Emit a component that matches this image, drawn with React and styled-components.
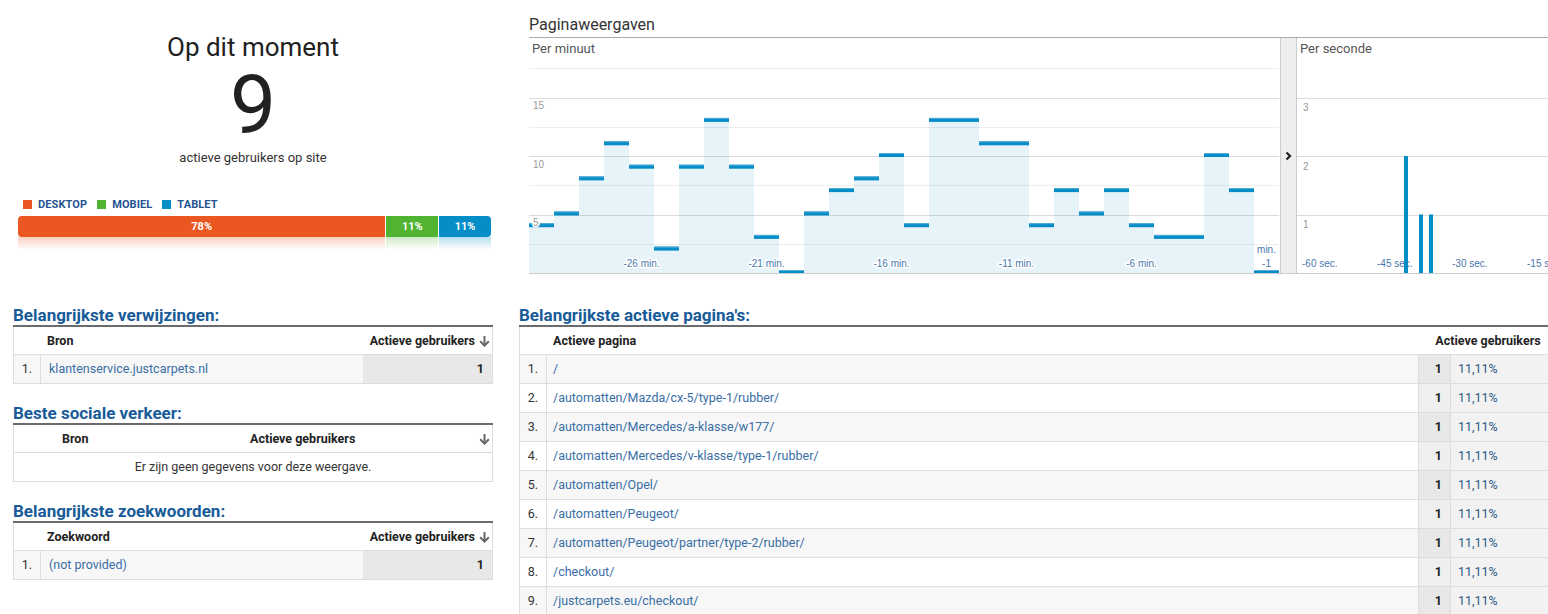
import React from 'react';
import styled, { createGlobalStyle } from 'styled-components';

const GlobalStyle = createGlobalStyle`
  html, body { margin: 0; padding: 0; background: #fff; }
  body {
    font-family: Roboto, "Noto Sans", "Liberation Sans", Arial, sans-serif;
    color: #222;
    width: 1548px;
    height: 614px;
    overflow: hidden;
  }
  *, *::before, *::after { box-sizing: border-box; }
`;

const Page = styled.div`
  display: grid;
  grid-template-columns: 480px 1040px;
  column-gap: 26px;
  padding-left: 13px;
  width: 1600px;
`;

const Column = styled.div`
  display: flex;
  flex-direction: column;
  min-width: 0;
`;

/* ---------- Now panel ---------- */
const NowPanel = styled.section`
  height: 274px;
  display: flex;
  flex-direction: column;
  align-items: center;
  padding-top: 32px;
`;
const NowTitle = styled.h1`
  margin: 0;
  font-size: 26px;
  line-height: 30px;
  font-weight: 400;
  color: #212121;
`;
const NowCount = styled.div`
  margin-top: 2px;
  font-size: 82px;
  line-height: 82px;
  font-weight: 400;
  color: #212121;
`;
const NowCaption = styled.div`
  margin-top: 3.5px;
  font-size: 13px;
  line-height: 16px;
  color: #333;
`;
const Legend = styled.ul`
  align-self: stretch;
  list-style: none;
  margin: 32px 0 0;
  padding: 0 0 0 10px;
  display: flex;
  gap: 10px;
`;
const LegendItem = styled.li`
  display: flex;
  align-items: center;
  gap: 6px;
  font-size: 11px;
  line-height: 13px;
  font-weight: 700;
  color: #1f5591;
  text-transform: uppercase;
  letter-spacing: 0.1px;
`;
const Swatch = styled.span`
  width: 9px;
  height: 9px;
  background: rgb(${p => p.$rgb});
`;
const DeviceBar = styled.div`
  align-self: stretch;
  margin: 5px 2px 0 5px;
  height: 21px;
  display: flex;
  gap: 1px;
  border-radius: 4px;
  overflow: hidden;
`;
const Segment = styled.div`
  flex: ${p => p.$share} 1 0;
  background: rgb(${p => p.$rgb});
  color: #fff;
  font-size: 11px;
  font-weight: 700;
  display: flex;
  align-items: center;
  justify-content: center;
`;
const Reflection = styled.div`
  align-self: stretch;
  margin: 0 2px 0 5px;
  height: 13px;
  display: flex;
  gap: 1px;
`;
const ReflectionSegment = styled.div`
  flex: ${p => p.$share} 1 0;
  background: linear-gradient(to bottom, rgba(${p => p.$rgb}, 0.28), rgba(${p => p.$rgb}, 0));
`;

/* ---------- Chart ---------- */
const ChartPanel = styled.section`
  margin-left: 10px;
  height: 274px;
  display: flex;
  flex-direction: column;
  width: max-content;
`;
const ChartTitle = styled.h2`
  margin: 0;
  padding: 15px 0 2px;
  font-size: 16px;
  line-height: 20px;
  font-weight: 400;
  color: #333;
  border-bottom: 1px solid #aaa;
`;
const ChartRow = styled.div`
  display: flex;
  height: 236px;
  border-bottom: 1px solid #ccc;
`;
const ChartSvg = styled.svg`
  display: block;
  flex: none;
`;
const Splitter = styled.div`
  flex: none;
  width: 17px;
  background: #eee;
  border-left: 1px solid #ccc;
  border-right: 1px solid #ccc;
  display: flex;
  align-items: center;
  justify-content: center;
`;

/* ---------- Tables ---------- */
const Tables = styled.div`
  padding-top: 12px;
  display: flex;
  flex-direction: column;
`;
const Block = styled.section`
  margin-top: 19px;
`;
const BlockTitle = styled.h2`
  margin: 0;
  padding: 1px 0 1px;
  font-size: 17px;
  line-height: 18px;
  font-weight: 700;
  color: #185b99;
  border-bottom: 2px solid #6b6b6b;
  white-space: nowrap;
`;
const Rows = styled.div`
  border-left: 1px solid #ddd;
  border-right: 1px solid #ddd;
`;
const HeadRow = styled.div`
  display: grid;
  grid-template-columns: ${p => p.$cols};
  height: 28px;
  border-bottom: 1px solid #ddd;
  font-size: 12.5px;
  font-weight: 700;
  color: #222;
`;
const BodyRow = styled.div`
  display: grid;
  grid-template-columns: ${p => p.$cols};
  height: 29px;
  border-bottom: 1px solid #ddd;
  background: ${p => (p.$shaded ? '#f7f7f7' : '#fff')};
  font-size: 12.5px;
`;
const HeadCell = styled.div`
  display: flex;
  align-items: center;
  justify-content: ${p => p.$justify || 'flex-start'};
  padding: 0 ${p => p.$pr || 0}px 0 ${p => p.$pl || 0}px;
  gap: 4px;
  white-space: nowrap;
`;
const RankCell = styled.div`
  display: flex;
  align-items: center;
  justify-content: center;
  padding-bottom: 1px;
  border-right: 1px solid #ddd;
  color: #333;
`;
const LinkCell = styled.a`
  display: flex;
  align-items: center;
  padding: 0 0 1px ${p => p.$pl}px;
  color: #3a6ea5;
  text-decoration: none;
  white-space: nowrap;
  overflow: hidden;
`;
const CountCell = styled.div`
  display: flex;
  align-items: center;
  justify-content: flex-end;
  padding: 0 8px 1px 0;
  font-weight: 700;
  color: #222;
  background: ${p => p.$bg};
  border-left: ${p => (p.$divider ? '1px solid #ddd' : 'none')};
`;
const PercentCell = styled.div`
  display: flex;
  align-items: center;
  padding: 0 0 1px 7px;
  border-left: 1px solid #ddd;
  background: #f2f2f2;
  color: #2d5a88;
`;
const EmptyCell = styled.div`
  grid-column: 1 / -1;
  display: flex;
  align-items: center;
  justify-content: center;
  padding-bottom: 1px;
  color: #333;
`;

/* ---------- Data ---------- */
const devices = [
  { label: 'Desktop', share: 78, rgb: '235, 87, 32' },
  { label: 'Mobiel', share: 11, rgb: '80, 180, 50' },
  { label: 'Tablet', share: 11, rgb: '5, 141, 199' },
];

const minuteValues = [4, 5, 8, 11, 9, 2, 9, 13, 9, 3, 0, 5, 7, 8, 10, 4, 13, 13, 11, 11, 4, 7, 5, 7, 4, 3, 3, 10, 7, 0];

const pages = [
  '/',
  '/automatten/Mazda/cx-5/type-1/rubber/',
  '/automatten/Mercedes/a-klasse/w177/',
  '/automatten/Mercedes/v-klasse/type-1/rubber/',
  '/automatten/Opel/',
  '/automatten/Peugeot/',
  '/automatten/Peugeot/partner/type-2/rubber/',
  '/checkout/',
  '/justcarpets.eu/checkout/',
];

const BLUE = '#058dc7';
const AXIS_TEXT = '#4a78ad';
const AXIS_FONT = '"Liberation Sans", Arial, sans-serif';

function SortArrow() {
  return (
    <svg width="11" height="12" viewBox="0 0 11 12" aria-hidden="true">
      <path d="M5.5 1 V10.5" stroke="#666" strokeWidth="2" fill="none" />
      <path d="M1.2 6.3 L5.5 10.6 L9.8 6.3" stroke="#666" strokeWidth="2" fill="none" />
    </svg>
  );
}

function Chevron() {
  return (
    <svg width="7" height="10" viewBox="0 0 7 10" aria-hidden="true">
      <path d="M1.5 1.5 L5 5 L1.5 8.5" stroke="#222" strokeWidth="2.2" fill="none" />
    </svg>
  );
}

const haloProps = {
  stroke: '#fff',
  strokeWidth: 3,
  paintOrder: 'stroke',
  strokeLinejoin: 'round',
};

function MinuteChart() {
  const H = 235;
  const unit = 11.7;
  const bw = 25;
  const y = v => H - v * unit;
  const grid = [2.5, 5, 7.5, 10, 12.5, 15, 17.5];
  const xLabels = [
    [4, '-26 min.'],
    [9, '-21 min.'],
    [14, '-16 min.'],
    [19, '-11 min.'],
    [24, '-6 min.'],
  ];
  return (
    <ChartSvg width="751" height="235" viewBox="0 0 751 235">
      {grid.map(v => (
        <line
          key={v}
          x1="0"
          x2="750"
          y1={Math.round(y(v)) + 0.5}
          y2={Math.round(y(v)) + 0.5}
          stroke={v % 5 === 0 ? '#dcdcdc' : '#eeeeee'}
          strokeWidth="1"
        />
      ))}
      <text x="3" y="15" fontFamily="Roboto, sans-serif" fontSize="13" fill="#555">Per minuut</text>
      {minuteValues.map((v, i) => {
        const top = y(v);
        const lineTop = top - 3;
        return (
          <g key={i}>
            <rect x={i * bw} y={top} width={bw} height={H - top} fill={BLUE} fillOpacity="0.1" />
            <rect x={i * bw} y={lineTop} width={bw} height={Math.min(4, H - lineTop)} fill={BLUE} />
            <rect x={i * bw} y={lineTop} width={bw} height="1" fill="#55acd6" />
          </g>
        );
      })}
      {[15, 10, 5].map(v => (
        <text key={v} x="4" y={y(v) + 11.5} fontFamily={AXIS_FONT} fontSize="10" fill="#999" {...haloProps}>
          {v}
        </text>
      ))}
      {xLabels.map(([i, t]) => (
        <text
          key={t}
          x={i * bw + 12.5}
          y="229"
          textAnchor="middle"
          fontFamily={AXIS_FONT}
          fontSize="10"
          fill={AXIS_TEXT}
          {...haloProps}
        >
          {t}
        </text>
      ))}
      <text x={29 * bw + 12.5} y="215" textAnchor="middle" fontFamily={AXIS_FONT} fontSize="10" fill={AXIS_TEXT} {...haloProps}>min.</text>
      <text x={29 * bw + 12.5} y="229" textAnchor="middle" fontFamily={AXIS_FONT} fontSize="10" fill={AXIS_TEXT} {...haloProps}>-1</text>
    </ChartSvg>
  );
}

function SecondChart() {
  const H = 235;
  const unit = 58.5;
  const y = v => H - v * unit;
  const bars = [
    [107, 2],
    [122, 1],
    [132, 1],
  ];
  const xLabels = [
    [5, '-60 sec.'],
    [80, '-45 sec.'],
    [155, '-30 sec.'],
    [230, '-15 sec.'],
  ];
  return (
    <ChartSvg width="300" height="235" viewBox="0 0 300 235">
      {[1, 2, 3].map(v => (
        <line key={v} x1="0" x2="300" y1={Math.round(y(v)) + 0.5} y2={Math.round(y(v)) + 0.5} stroke="#dcdcdc" strokeWidth="1" />
      ))}
      <text x="3" y="15" fontFamily="Roboto, sans-serif" fontSize="13" fill="#555">Per seconde</text>
      {[3, 2, 1].map(v => (
        <text key={v} x="6" y={y(v) + 13.5} fontFamily={AXIS_FONT} fontSize="10" fill="#999" {...haloProps}>
          {v}
        </text>
      ))}
      {xLabels.map(([x, t]) => (
        <text key={t} x={x} y="229" fontFamily={AXIS_FONT} fontSize="10" fill={AXIS_TEXT} {...haloProps}>
          {t}
        </text>
      ))}
      {bars.map(([x, v]) => (
        <rect key={x} x={x} y={y(v)} width="4" height={H - y(v)} fill={BLUE} />
      ))}
    </ChartSvg>
  );
}

const LEFT_COLS = '27px 1fr 129px';
const RIGHT_COLS = '27px 1fr 32px 108px';

function RankedTable({ title, column, rows }) {
  return (
    <Block>
      <BlockTitle>{title}</BlockTitle>
      <Rows>
        <HeadRow $cols={LEFT_COLS}>
          <HeadCell />
          <HeadCell $pl={6}>{column}</HeadCell>
          <HeadCell $justify="flex-end" $pr={2}>
            Actieve gebruikers <SortArrow />
          </HeadCell>
        </HeadRow>
        {rows.map((r, i) => (
          <BodyRow key={r.label} $cols={LEFT_COLS} $shaded={i % 2 === 0}>
            <RankCell>{i + 1}.</RankCell>
            <LinkCell href="#" $pl={8}>{r.label}</LinkCell>
            <CountCell $bg="#e8e8e8">{r.count}</CountCell>
          </BodyRow>
        ))}
      </Rows>
    </Block>
  );
}

export default function App() {
  return (
    <>
      <GlobalStyle />
      <Page>
        <Column>
          <NowPanel>
            <NowTitle>Op dit moment</NowTitle>
            <NowCount>9</NowCount>
            <NowCaption>actieve gebruikers op site</NowCaption>
            <Legend>
              {devices.map(d => (
                <LegendItem key={d.label}>
                  <Swatch $rgb={d.rgb} />
                  {d.label}
                </LegendItem>
              ))}
            </Legend>
            <DeviceBar>
              {devices.map(d => (
                <Segment key={d.label} $share={d.share} $rgb={d.rgb}>
                  {d.share}%
                </Segment>
              ))}
            </DeviceBar>
            <Reflection>
              {devices.map(d => (
                <ReflectionSegment key={d.label} $share={d.share} $rgb={d.rgb} />
              ))}
            </Reflection>
          </NowPanel>
          <Tables>
            <RankedTable
              title="Belangrijkste verwijzingen:"
              column="Bron"
              rows={[{ label: 'klantenservice.justcarpets.nl', count: 1 }]}
            />
            <Block>
              <BlockTitle>Beste sociale verkeer:</BlockTitle>
              <Rows>
                <HeadRow $cols="236px 1fr auto">
                  <HeadCell $pl={48}>Bron</HeadCell>
                  <HeadCell>Actieve gebruikers</HeadCell>
                  <HeadCell $justify="flex-end" $pr={2}>
                    <SortArrow />
                  </HeadCell>
                </HeadRow>
                <BodyRow $cols="1fr">
                  <EmptyCell>Er zijn geen gegevens voor deze weergave.</EmptyCell>
                </BodyRow>
              </Rows>
            </Block>
            <RankedTable
              title="Belangrijkste zoekwoorden:"
              column="Zoekwoord"
              rows={[{ label: '(not provided)', count: 1 }]}
            />
          </Tables>
        </Column>
        <Column>
          <ChartPanel>
            <ChartTitle>Paginaweergaven</ChartTitle>
            <ChartRow>
              <MinuteChart />
              <Splitter>
                <Chevron />
              </Splitter>
              <SecondChart />
            </ChartRow>
          </ChartPanel>
          <Tables>
            <Block>
              <BlockTitle>Belangrijkste actieve pagina's:</BlockTitle>
              <Rows>
                <HeadRow $cols="27px 1fr 140px">
                  <HeadCell />
                  <HeadCell $pl={6}>Actieve pagina</HeadCell>
                  <HeadCell $justify="center">Actieve gebruikers</HeadCell>
                </HeadRow>
                {pages.map((p, i) => (
                  <BodyRow key={p} $cols={RIGHT_COLS} $shaded={i % 2 === 0}>
                    <RankCell>{i + 1}.</RankCell>
                    <LinkCell href="#" $pl={6}>{p}</LinkCell>
                    <CountCell $divider $bg={i % 2 === 0 ? '#e8e8e8' : '#efefef'}>1</CountCell>
                    <PercentCell>11,11%</PercentCell>
                  </BodyRow>
                ))}
              </Rows>
            </Block>
          </Tables>
        </Column>
      </Page>
    </>
  );
}
